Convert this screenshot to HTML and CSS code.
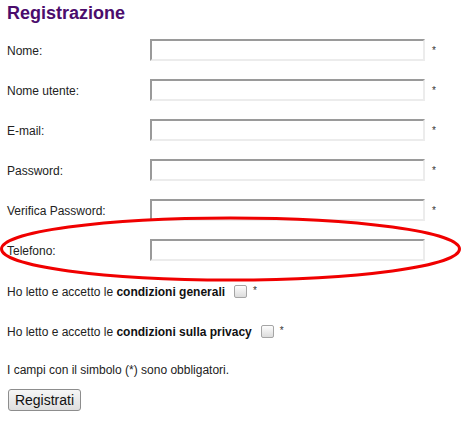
FILE: index.html
```html
<!DOCTYPE html>
<html lang="it">
<head>
<meta charset="utf-8">
<title>Registrazione</title>
<link rel="stylesheet" href="styles.css">
</head>
<body>
<div class="page">
  <h1 class="title">Registrazione</h1>
  <form class="form">
    <div class="row"><label class="lbl">Nome:</label><input class="field" type="text"><span class="req">*</span></div>
    <div class="row"><label class="lbl">Nome utente:</label><input class="field" type="text"><span class="req">*</span></div>
    <div class="row"><label class="lbl">E-mail:</label><input class="field" type="text"><span class="req">*</span></div>
    <div class="row"><label class="lbl">Password:</label><input class="field" type="password"><span class="req">*</span></div>
    <div class="row"><label class="lbl">Verifica Password:</label><input class="field" type="password"><span class="req">*</span></div>
    <div class="row"><label class="lbl">Telefono:</label><input class="field" type="text"></div>
    <div class="check-row">Ho letto e accetto le&nbsp;<b>condizioni generali</b><span class="box"></span><span class="req">*</span></div>
    <div class="check-row">Ho letto e accetto le&nbsp;<b>condizioni sulla privacy</b><span class="box"></span><span class="req">*</span></div>
    <div class="note">I campi con il simbolo (*) sono obbligatori.</div>
    <div class="actions"><button class="btn" type="button">Registrati</button></div>
  </form>
  <svg class="circle" width="463" height="70" viewBox="0 0 463 70">
    <ellipse cx="230.5" cy="34" rx="229" ry="31" fill="none" stroke="#f00000" stroke-width="3"/>
  </svg>
</div>
</body>
</html>
```
FILE: styles.css
```css
html, body {
  margin: 0;
  padding: 0;
  background: #fff;
}
body {
  font-family: "Liberation Sans", Arial, sans-serif;
  color: #222;
  font-size: 12px;
}
.page {
  position: relative;
  width: 473px;
  height: 425px;
}
.title {
  margin: 0;
  padding: 3px 0 0 7px;
  height: 30px;
  box-sizing: border-box;
  font-size: 18px;
  line-height: 21px;
  font-weight: bold;
  color: #4b0c6c;
}
.form {
  display: flex;
  flex-direction: column;
  padding-left: 7px;
}
.row {
  display: flex;
  align-items: center;
  height: 40px;
}
.lbl {
  width: 143px;
  flex: none;
  padding-top: 2px;
}
.field {
  width: 275px;
  height: 22px;
  box-sizing: border-box;
  margin: 0;
  padding: 0;
  background: #fff;
  border-top: 2px solid #9a9a9a;
  border-left: 2px solid #9a9a9a;
  border-right: 2px solid #ececec;
  border-bottom: 2px solid #ececec;
  outline: none;
}
.req {
  font-size: 10px;
  color: #333;
  margin-left: 7px;
}
.check-row {
  display: flex;
  align-items: center;
  height: 40px;
  padding-top: 4px;
  box-sizing: border-box;
}
.check-row b {
  font-weight: bold;
  color: #111;
}
.box {
  width: 11px;
  height: 11px;
  margin-left: 9px;
  border: 1px solid #a5a5a5;
  border-radius: 2px;
  background: linear-gradient(#fdfdfd, #dcdcdc);
  margin-top: -2px;
}
.check-row .req {
  margin-left: 6px;
  margin-top: -3px;
}
.note {
  height: 38px;
  display: flex;
  align-items: center;
  padding-top: 2px;
  box-sizing: border-box;
}
.actions {
  padding-left: 1px;
  padding-top: 1px;
}
.btn {
  width: 73px;
  height: 22px;
  margin: 0;
  padding: 0;
  font-family: "Liberation Sans", Arial, sans-serif;
  font-size: 14px;
  color: #111;
  border: 1px solid #8d8d8d;
  border-radius: 3px;
  background: linear-gradient(#f6f6f6, #dedede);
}
.circle {
  position: absolute;
  left: 0;
  top: 215px;
}
```
